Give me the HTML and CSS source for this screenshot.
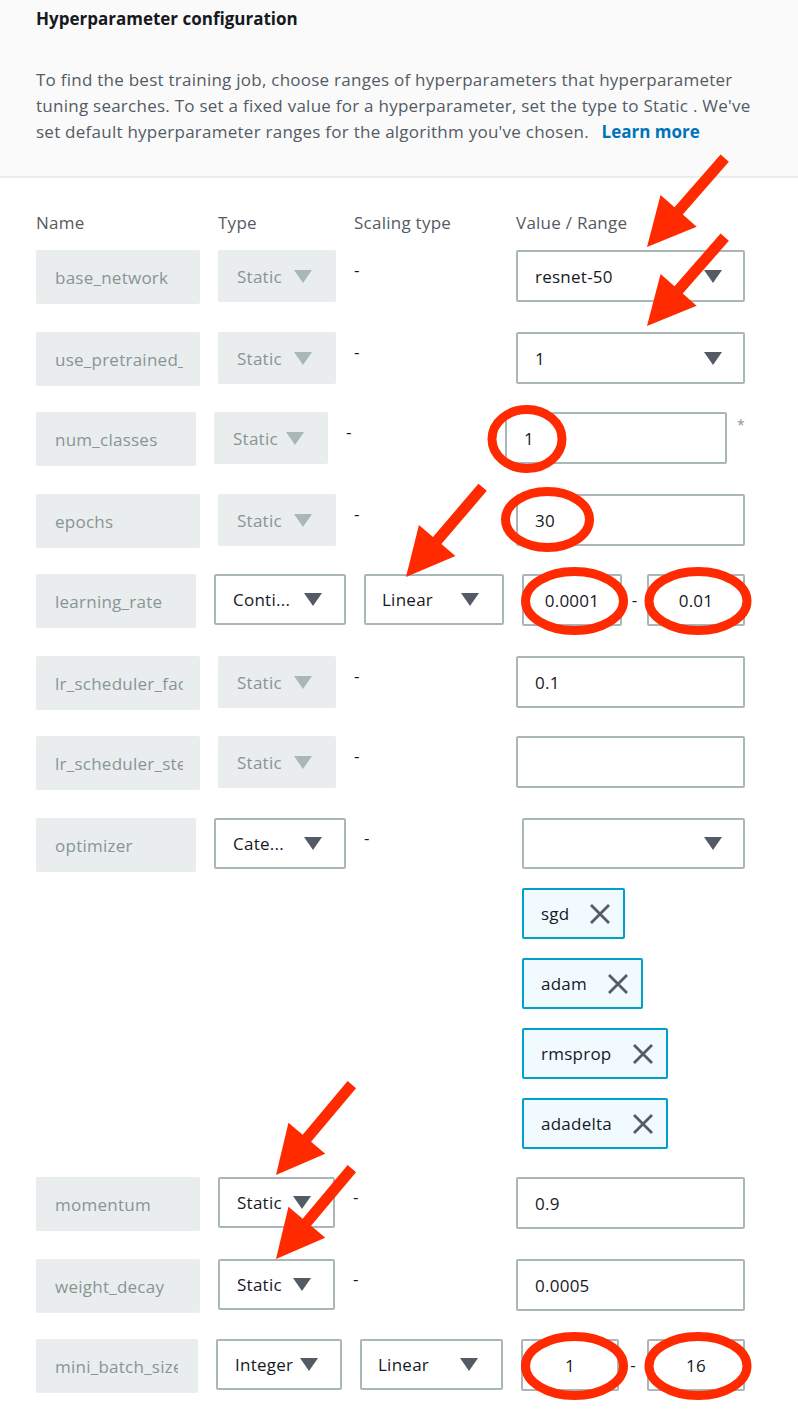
FILE: index.html
```html
<!DOCTYPE html>
<html lang="en">
<head>
<meta charset="utf-8">
<title>Hyperparameter configuration</title>
<link rel="stylesheet" href="styles.css">
</head>
<body>
<div class="page">
  <section class="header">
    <h2 class="title">Hyperparameter configuration</h2>
    <p class="desc">To find the best training job, choose ranges of hyperparameters that hyperparameter tuning searches. To set a fixed value for a hyperparameter, set the type to Static . We've set default hyperparameter ranges for the algorithm you've chosen. <a href="#" class="link">Learn more</a></p>
  </section>

  <section class="table">
    <div class="thead">
      <div class="th th-name">Name</div>
      <div class="th th-type">Type</div>
      <div class="th th-scale">Scaling type</div>
      <div class="th">Value / Range</div>
    </div>

    <div class="rows">
      <div class="row">
        <div class="name"><span>base_network</span></div>
        <div class="type disabled"><span>Static</span><i class="caret"></i></div>
        <div class="scale"><div class="dash">-</div></div>
        <div class="value"><div class="input select-val"><span>resnet-50</span><i class="caret"></i></div></div>
      </div>

      <div class="row r-lo">
        <div class="name"><span>use_pretrained_model</span></div>
        <div class="type disabled"><span>Static</span><i class="caret"></i></div>
        <div class="scale"><div class="dash">-</div></div>
        <div class="value"><div class="input select-val"><span>1</span><i class="caret"></i></div></div>
      </div>

      <div class="row">
        <div class="name narrow"><span>num_classes</span></div>
        <div class="type disabled w114"><span>Static</span><i class="caret"></i></div>
        <div class="scale"><div class="dash">-</div></div>
        <div class="value v240"><div class="input w222"><span>1</span></div><span class="req">*</span></div>
      </div>

      <div class="row r-lo">
        <div class="name"><span>epochs</span></div>
        <div class="type disabled"><span>Static</span><i class="caret"></i></div>
        <div class="scale"><div class="dash">-</div></div>
        <div class="value"><div class="input"><span>30</span></div></div>
      </div>

      <div class="row">
        <div class="name narrow"><span>learning_rate</span></div>
        <div class="type select w132"><span>Conti...</span><i class="caret"></i></div>
        <div class="scale"><div class="select scale-select"><span>Linear</span><i class="caret"></i></div></div>
        <div class="value v223">
          <div class="range">
            <div class="input range-in"><span>0.0001</span></div>
            <span class="range-dash">-</span>
            <div class="input range-in r98"><span>0.01</span></div>
          </div>
        </div>
      </div>

      <div class="row r-lo">
        <div class="name"><span>lr_scheduler_factor</span></div>
        <div class="type disabled"><span>Static</span><i class="caret"></i></div>
        <div class="scale"><div class="dash">-</div></div>
        <div class="value"><div class="input"><span>0.1</span></div></div>
      </div>

      <div class="row">
        <div class="name"><span>lr_scheduler_step</span></div>
        <div class="type disabled"><span>Static</span><i class="caret"></i></div>
        <div class="scale"><div class="dash">-</div></div>
        <div class="value"><div class="input"><span></span></div></div>
      </div>

      <div class="row r-lo">
        <div class="name narrow"><span>optimizer</span></div>
        <div class="type select w132"><span>Cate...</span><i class="caret"></i></div>
        <div class="scale"><div class="dash">-</div></div>
        <div class="value v223">
          <div class="input select-val h51"><span></span><i class="caret"></i></div>
          <div class="tokens">
            <div class="token"><span>sgd</span><svg class="x" viewBox="0 0 22 22"><path d="M2 2 L20 20 M20 2 L2 20"/></svg></div>
            <div class="token"><span>adam</span><svg class="x" viewBox="0 0 22 22"><path d="M2 2 L20 20 M20 2 L2 20"/></svg></div>
            <div class="token"><span>rmsprop</span><svg class="x" viewBox="0 0 22 22"><path d="M2 2 L20 20 M20 2 L2 20"/></svg></div>
            <div class="token"><span>adadelta</span><svg class="x" viewBox="0 0 22 22"><path d="M2 2 L20 20 M20 2 L2 20"/></svg></div>
          </div>
        </div>
      </div>

      <div class="row r-lo">
        <div class="name"><span>momentum</span></div>
        <div class="type select w117"><span>Static</span><i class="caret"></i></div>
        <div class="scale"><div class="dash">-</div></div>
        <div class="value"><div class="input"><span>0.9</span></div></div>
      </div>

      <div class="row r-lo">
        <div class="name"><span>weight_decay</span></div>
        <div class="type select w117"><span>Static</span><i class="caret"></i></div>
        <div class="scale"><div class="dash">-</div></div>
        <div class="value"><div class="input"><span>0.0005</span></div></div>
      </div>

      <div class="row">
        <div class="name mid"><span>mini_batch_size</span></div>
        <div class="type select w126"><span>Integer</span><i class="caret"></i></div>
        <div class="scale"><div class="select scale-select"><span>Linear</span><i class="caret"></i></div></div>
        <div class="value v224">
          <div class="range">
            <div class="input range-in r98"><span>1</span></div>
            <span class="range-dash">-</span>
            <div class="input range-in r98"><span>16</span></div>
          </div>
        </div>
      </div>
    </div>
  </section>

  <svg class="annot" width="798" height="1416" viewBox="0 0 798 1416" aria-hidden="true">
    <defs>
      <polygon id="arrow" points="0,0 -48,-24 -48,-5.5 -118,-5.5 -118,5.5 -48,5.5 -48,24"/>
    </defs>
    <g fill="#ff2a00">
      <use href="#arrow" transform="translate(647,247) rotate(131.2)"/>
      <use href="#arrow" transform="translate(647,326) rotate(131.2)"/>
      <use href="#arrow" transform="translate(406,577) rotate(130.5)"/>
      <use href="#arrow" transform="translate(276,1175) rotate(130)"/>
      <use href="#arrow" transform="translate(276,1259) rotate(130)"/>
    </g>
    <g fill="none" stroke="#ff2a00" stroke-width="9">
      <ellipse cx="527" cy="439" rx="35" ry="29.5"/>
      <ellipse cx="547.5" cy="519.5" rx="42" ry="28"/>
      <ellipse cx="574.5" cy="601" rx="49" ry="29.5"/>
      <ellipse cx="698" cy="601" rx="49" ry="29.5"/>
      <ellipse cx="574.5" cy="1366" rx="49" ry="29.5"/>
      <ellipse cx="698" cy="1366" rx="49" ry="29.5"/>
    </g>
  </svg>
</div>
</body>
</html>
```

FILE: styles.css
```css
* { box-sizing: border-box; }

html, body {
  margin: 0;
  padding: 0;
  background: #ffffff;
}

body {
  font-family: "Open Sans", "Noto Sans", sans-serif;
  font-size: 17px;
  letter-spacing: 0.25px;
  color: #16191f;
}

.page {
  position: relative;
  width: 798px;
  min-height: 1416px;
  overflow: hidden;
}

/* header */
.header {
  background: #fafafa;
  border-bottom: 2px solid #eaeded;
  padding: 7px 36px 31px;
}

.title {
  margin: 0;
  font-size: 17px;
  font-weight: 700;
  letter-spacing: 0;
  line-height: 24px;
  color: #16191f;
}

.desc {
  margin: 36px 0 0;
  width: 726px;
  line-height: 26px;
  color: #545b64;
}

.link {
  color: #0073bb;
  font-weight: 700;
  letter-spacing: 0;
  text-decoration: none;
  margin-left: 8px;
}

/* table */
.table {
  padding: 33px 0 0 36px;
}

.thead {
  display: flex;
  line-height: 24px;
  color: #545b64;
}

.th-name { width: 182px; }
.th-type { width: 136px; }
.th-scale { width: 162px; }

.rows {
  display: flex;
  flex-direction: column;
  gap: 26px;
  margin-top: 15px;
  width: 709px;
}

.row {
  display: flex;
  align-items: flex-start;
  gap: 18px;
}

.row.r-lo { margin-top: 2px; }

.name {
  flex: none;
  width: 164px;
  height: 54px;
  background: #eaeded;
  border-radius: 2px;
  color: #879596;
  padding: 0 17px 0 19px;
  display: flex;
  align-items: center;
}

.name span {
  flex: 1;
  min-width: 0;
  overflow: hidden;
  white-space: nowrap;
}

.name.narrow { width: 160px; }
.name.mid { width: 162px; padding-right: 20px; }

.type {
  flex: none;
  width: 118px;
  height: 52px;
  display: flex;
  align-items: center;
  justify-content: space-between;
  padding: 0 24px 0 19px;
  border-radius: 2px;
  white-space: nowrap;
}

.type.disabled {
  background: #eaeded;
  color: #879596;
}

.type.disabled .caret {
  border-top-color: #aab7b8;
}

.select {
  background: #ffffff;
  border: 2px solid #aab7b8;
  border-radius: 2px;
  padding: 0 22px 0 17px;
  color: #16191f;
}

.type.select { height: 51px; }

.w114 { width: 114px; }
.w117 { width: 117px; }
.w126 { width: 126px; }
.w132 { width: 132px; }

.caret {
  display: block;
  flex: none;
  width: 0;
  height: 0;
  border-left: 9px solid transparent;
  border-right: 9px solid transparent;
  border-top: 13px solid #545b64;
}

.scale {
  flex: 1;
  min-width: 0;
}

.dash {
  padding-top: 8px;
  line-height: 24px;
  color: #16191f;
}

.scale-select {
  height: 51px;
  display: flex;
  align-items: center;
  justify-content: space-between;
  padding: 0 23px 0 16px;
}

.value {
  flex: none;
  width: 229px;
}

.v223 { width: 223px; }
.v224 { width: 224px; }
.v240 {
  width: 240px;
  display: flex;
  align-items: flex-start;
  margin-left: -11px;
}

.input {
  height: 52px;
  border: 2px solid #aab7b8;
  border-radius: 2px;
  background: #ffffff;
  padding: 0 21px 0 17px;
  display: flex;
  align-items: center;
  justify-content: space-between;
  color: #16191f;
  white-space: nowrap;
}

.h51 { height: 51px; }

.w222 { width: 222px; flex: none; }

.req {
  margin-left: 10px;
  margin-top: 6px;
  font-size: 14px;
  line-height: 14px;
  color: #879596;
}

.range {
  display: flex;
  align-items: center;
}

.range-in {
  width: 100px;
  flex: none;
  padding: 0;
  justify-content: center;
}

.range-in.r98 { width: 98px; }

.range-dash {
  flex: 1;
  text-align: center;
  line-height: 24px;
}

.tokens {
  display: flex;
  flex-direction: column;
  align-items: flex-start;
  gap: 19px;
  margin-top: 19px;
}

.token {
  height: 51px;
  border: 2px solid #00a1c9;
  border-radius: 2px;
  background: #f1faff;
  display: flex;
  align-items: center;
  gap: 20px;
  padding: 0 12px 0 17px;
  color: #16191f;
}

.x {
  width: 22px;
  height: 22px;
  flex: none;
  fill: none;
  stroke: #545b64;
  stroke-width: 2.8;
}

.annot {
  position: absolute;
  top: 0;
  left: 0;
  pointer-events: none;
}
```
